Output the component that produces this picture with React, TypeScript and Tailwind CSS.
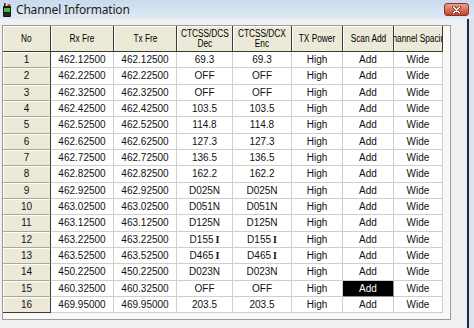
import React from 'react';

const rows: string[][] = [
  ['1', '462.12500', '462.12500', '69.3', '69.3'],
  ['2', '462.22500', '462.22500', 'OFF', 'OFF'],
  ['3', '462.32500', '462.32500', 'OFF', 'OFF'],
  ['4', '462.42500', '462.42500', '103.5', '103.5'],
  ['5', '462.52500', '462.52500', '114.8', '114.8'],
  ['6', '462.62500', '462.62500', '127.3', '127.3'],
  ['7', '462.72500', '462.72500', '136.5', '136.5'],
  ['8', '462.82500', '462.82500', '162.2', '162.2'],
  ['9', '462.92500', '462.92500', 'D025N', 'D025N'],
  ['10', '463.02500', '463.02500', 'D051N', 'D051N'],
  ['11', '463.12500', '463.12500', 'D125N', 'D125N'],
  ['12', '463.22500', '463.22500', 'D155I', 'D155I'],
  ['13', '463.52500', '463.52500', 'D465I', 'D465I'],
  ['14', '450.22500', '450.22500', 'D023N', 'D023N'],
  ['15', '460.32500', '460.32500', 'OFF', 'OFF'],
  ['16', '469.95000', '469.95000', '203.5', '203.5'],
];

const cols = 'grid grid-cols-[48px_63px_63px_56px_59px_51px_51px_49px]';

function Tone({ v }: { v: string }) {
  // the inverted codes end in a serif "I" from another font
  if (v.endsWith('I') && v.startsWith('D')) {
    return (
      <span>
        {v.slice(0, -1)}
        <span className="ml-[2px] font-['Liberation_Serif',serif] font-bold text-[10px]">I</span>
      </span>
    );
  }
  return <span>{v}</span>;
}

function Head({ children }: { children: React.ReactNode }) {
  return (
    <div className="flex items-center justify-center overflow-hidden whitespace-nowrap text-center leading-[10px] bg-[#ece9d8] border-r border-b border-[#3a3a36] shadow-[inset_1px_1px_0_#ffffff] text-[10px] text-black">
      <span className="inline-block shrink-0 scale-x-[0.83]">{children}</span>
    </div>
  );
}

function RadioIcon() {
  return (
    <svg width="10" height="14" viewBox="0 0 10 14">
      <rect x="2" y="0" width="1.5" height="4" fill="#222" />
      <rect x="5.5" y="1" width="3" height="2" fill="#d04a20" />
      <rect x="1" y="3" width="8" height="11" rx="1" fill="#141414" />
      <rect x="2" y="5" width="6" height="4" fill="#3fbf3a" />
      <rect x="2" y="10" width="6" height="3" fill="#2a2a2a" />
    </svg>
  );
}

export default function App() {
  return (
    <div className="w-[474px] h-[328px] overflow-hidden bg-[#f0f0f0] font-['Liberation_Sans',Arial,sans-serif] text-[10px] text-[#111]">
      {/* title bar */}
      <div className="h-[19px] flex items-center bg-gradient-to-b from-[#c9daed] to-[#e0eaf4] pl-[2px] pr-[5px]">
        <RadioIcon />
        <span className="ml-[4px] font-['Noto_Sans',sans-serif] text-[12px] tracking-[-0.2px] text-[#1c1c1c] leading-none">
          Channel Information
        </span>
        <div className="ml-auto w-[25px] h-[13px] rounded-[3px] border border-[#8c3324] bg-gradient-to-b from-[#e9a08f] to-[#c3432d] flex items-center justify-center">
          <svg width="9" height="8" viewBox="0 0 9 8">
            <path d="M1.5 1 L7.5 7 M7.5 1 L1.5 7" stroke="#6b1e12" strokeWidth="3" strokeLinecap="round" />
            <path d="M1.5 1 L7.5 7 M7.5 1 L1.5 7" stroke="#ffffff" strokeWidth="1.6" strokeLinecap="round" />
          </svg>
        </div>
      </div>

      <div className="flex h-[309px]">
        <div className="w-[467px] pl-[2px] pt-[6px]">
          {/* grid control */}
          <div className="w-[449px] h-[295px] border border-[#9a9a9a] bg-[#f8f8f8]">
            <div className={`${cols} h-[26px]`}>
              <Head>No</Head>
              <Head>Rx Fre</Head>
              <Head>Tx Fre</Head>
              <Head>
                CTCSS/DCS
                <br />
                Dec
              </Head>
              <Head>
                CTCSS/DCX
                <br />
                Enc
              </Head>
              <Head>TX Power</Head>
              <Head>Scan Add</Head>
              <Head>Channel Spacing</Head>
            </div>
            {rows.map((r, i) => (
              <div key={r[0]} className={`${cols} h-[16.33px]`}>
                <div
                  className={`flex items-center justify-center bg-[#ece9d8] border-r border-r-[#3c3c38] border-b shadow-[inset_1px_1px_0_#ffffff] ${
                    i === rows.length - 1 ? 'border-b-[#3c3c38]' : 'border-b-[#aca899]'
                  }`}
                >
                  {r[0]}
                </div>
                <div className="flex items-center justify-center bg-white border-r border-b border-[#cfcfcf]">{r[1]}</div>
                <div className="flex items-center justify-center bg-white border-r border-b border-[#cfcfcf]">{r[2]}</div>
                <div className="flex items-center justify-center bg-white border-r border-b border-[#cfcfcf]">
                  <Tone v={r[3]} />
                </div>
                <div className="flex items-center justify-center bg-white border-r border-b border-[#cfcfcf]">
                  <Tone v={r[4]} />
                </div>
                <div className="flex items-center justify-center bg-white border-r border-b border-[#cfcfcf]">High</div>
                {i === 14 ? (
                  <div className="flex items-center justify-center bg-black text-white border-r border-b border-[#8a8a8a]">Add</div>
                ) : (
                  <div className="flex items-center justify-center bg-white border-r border-b border-[#cfcfcf]">Add</div>
                )}
                <div className="flex items-center justify-center bg-white border-r border-b border-[#cfcfcf]">Wide</div>
              </div>
            ))}
          </div>
        </div>
        <div className="w-[2px] bg-[#1c2a44]" />
        <div className="flex-1 bg-[#dbe5ef]" />
      </div>
    </div>
  );
}
